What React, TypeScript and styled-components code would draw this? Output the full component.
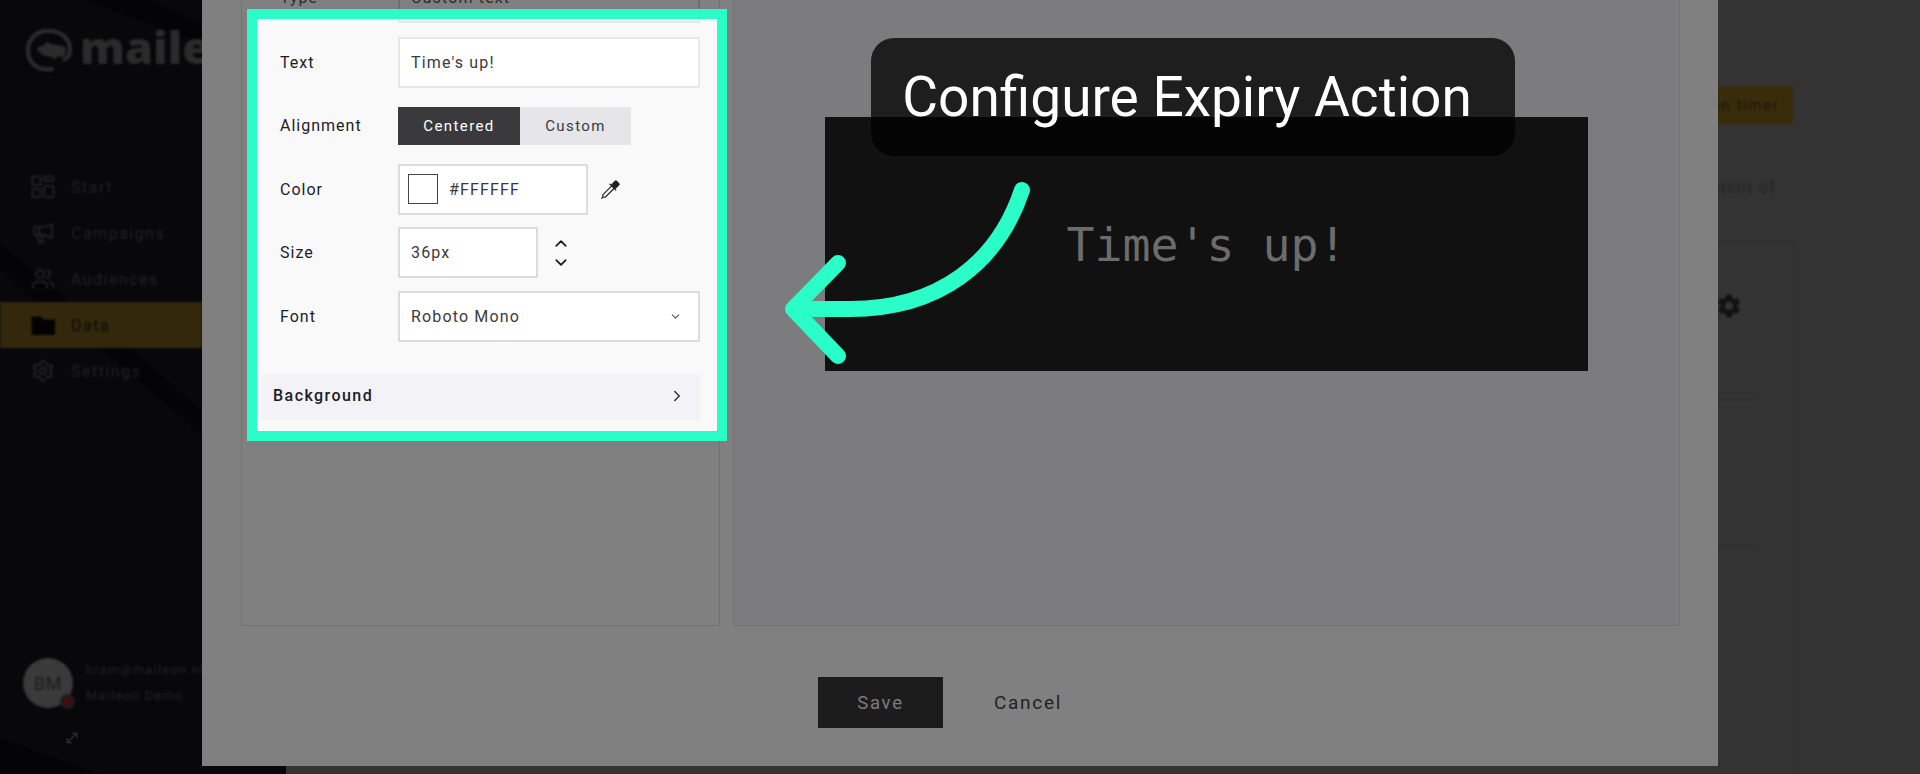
import React from 'react';
import styled, { createGlobalStyle } from 'styled-components';
import { ChevronDown, ChevronRight, ChevronUp, Megaphone, MoveDiagonal, Users, Settings } from 'lucide-react';
import { BsEyedropper } from 'react-icons/bs';
import { MdSettings } from 'react-icons/md';

const ACCENT = '#2bfdc8';

const GlobalStyle = createGlobalStyle`
    html, body {
        margin: 0;
        height: 100%;
        overflow: hidden;
        background: #333;
    }
    body, button {
        font-family: Roboto, "Liberation Sans", sans-serif;
    }
`;

const Stage = styled.div`
    position: relative;
    display: flex;
    width: 1920px;
    height: 774px;
    overflow: hidden;
`;

/* ---- dimmed app behind the dialog ---- */

const Sidebar = styled.aside`
    position: relative;
    flex: 0 0 202px;
    height: 774px;
    overflow: hidden;
    background: #08080b;
`;

const SidebarBands = styled.svg`
    position: absolute;
    left: 0;
    top: 0;
`;

const SidebarBlur = styled.div`
    position: relative;
    display: flex;
    flex-direction: column;
    height: 100%;
    filter: blur(0.8px);
`;

const Logo = styled.div`
    display: flex;
    align-items: center;
    gap: 7px;
    height: 44px;
    padding: 28px 0 0 25px;
    white-space: nowrap;
    color: #2b2b2b;
    font-family: "Open Sans", sans-serif;
    font-size: 45px;
    font-weight: 800;
    & svg {
        flex: none;
    }
`;

const LogoText = styled.span`
    margin-bottom: 8px;
`;

const Nav = styled.nav`
    display: flex;
    flex-direction: column;
    margin-top: 92px;
`;

const NavRow = styled.div<{ $active?: boolean }>`
    display: flex;
    align-items: center;
    gap: 16px;
    height: 46px;
    padding-left: 31px;
    background: ${(p) => (p.$active ? '#33280c' : 'transparent')};
    color: ${(p) => (p.$active ? '#0b0b0b' : '#222225')};
    font-size: 16px;
    letter-spacing: 1.5px;
    & svg {
        flex: none;
        width: 24px;
        height: 24px;
    }
`;

const Account = styled.div`
    display: flex;
    align-items: center;
    gap: 13px;
    margin-top: auto;
    margin-bottom: 62px;
    padding: 0 0 4px 23px;
`;

const Avatar = styled.div`
    position: relative;
    display: flex;
    flex: none;
    align-items: center;
    justify-content: center;
    width: 50px;
    height: 50px;
    border-radius: 50%;
    background: #3a3a3a;
    color: #1c1c1c;
    font-size: 18px;
    letter-spacing: 0.5px;
`;

const AvatarBadge = styled.span`
    position: absolute;
    right: -2px;
    bottom: -1px;
    width: 15px;
    height: 15px;
    border-radius: 50%;
    background: radial-gradient(circle, #470a13 0 4px, #1d1d1f 5px);
`;

const AccountText = styled.div`
    display: flex;
    flex-direction: column;
    gap: 12px;
    color: #252528;
    font-size: 12.5px;
    line-height: 14px;
    letter-spacing: 1.4px;
    white-space: nowrap;
`;

const ExpandIcon = styled(MoveDiagonal)`
    position: absolute;
    left: 64px;
    top: 730px;
    width: 16px;
    height: 16px;
    color: #2c2c2c;
    filter: blur(0.6px);
`;

const Main = styled.main`
    flex: 1;
    display: flex;
    flex-direction: column;
    align-items: flex-end;
    padding-top: 86px;
    background: linear-gradient(to right, #08080b 84px, #333 84px);
    color: #242424;
`;

const BackdropBlur = styled.div`
    display: flex;
    flex-direction: column;
    align-items: flex-end;
    width: 100%;
    filter: blur(0.8px);
`;

const TimerButton = styled.div`
    display: flex;
    align-items: center;
    justify-content: flex-end;
    width: 240px;
    height: 38px;
    margin-right: 127px;
    padding-right: 14px;
    box-sizing: border-box;
    background: #382c0b;
    color: #191509;
    font-size: 15px;
    letter-spacing: 1.5px;
`;

const Intro = styled.p`
    margin: 55px 144px 0 0;
    font-size: 16px;
    line-height: 18px;
    letter-spacing: 1.3px;
    white-space: nowrap;
`;

const BackdropCard = styled.div`
    display: flex;
    flex-direction: column;
    align-items: flex-end;
    width: 300px;
    height: 560px;
    box-sizing: border-box;
    margin: 45px 125px 0 0;
    padding: 49px 51px 0 0;
    border-top: 1px solid #2f2f2f;
    border-right: 1px solid #2e2e2e;
    color: #111;
    & svg {
        width: 28px;
        height: 28px;
    }
`;

const CardRule = styled.div<{ $gap: number }>`
    width: 90px;
    height: 1px;
    margin-top: ${(p) => p.$gap}px;
    margin-right: -11px;
    background: #2d2d2d;
`;

/* ---- dialog ---- */

const Modal = styled.section`
    position: absolute;
    left: 202px;
    top: 0;
    display: flex;
    flex-direction: column;
    box-sizing: border-box;
    width: 1516px;
    height: 766px;
    padding: 0 39px;
    background: #808080;
`;

const Panels = styled.div`
    display: grid;
    grid-template-columns: 479px 947px;
    gap: 13px;
    height: 626px;
    flex: none;
`;

const FormPanel = styled.div`
    display: flex;
    flex-direction: column;
    box-sizing: border-box;
    height: 626px;
    border: 1px solid #737375;
    border-top: none;
`;

const PreviewPanel = styled.div`
    display: flex;
    justify-content: center;
    box-sizing: border-box;
    height: 626px;
    padding-top: 117px;
    border: 1px solid #737375;
    border-top: none;
    background: #7c7c7e;
`;

const Preview = styled.div`
    display: flex;
    align-items: center;
    justify-content: center;
    box-sizing: border-box;
    width: 763px;
    height: 254px;
    padding-top: 2px;
    background: #111;
    color: #6c6c6c;
    font-family: "DejaVu Sans Mono", monospace;
    font-size: 46.5px;
`;

const Row = styled.div<{ $dim?: boolean }>`
    display: grid;
    grid-template-columns: 118px 302px;
    align-items: center;
    height: 51px;
    color: ${(p) => (p.$dim ? '#2e2e2e' : '#1c1c28')};
    font-size: 16px;
    letter-spacing: 1px;
`;

const DimRow = styled(Row)`
    margin: -28px 0 0 38px;
`;

const Field = styled.div<{ $width?: number; $dim?: boolean; $soft?: boolean }>`
    display: flex;
    align-items: center;
    justify-content: space-between;
    box-sizing: border-box;
    width: ${(p) => p.$width ?? 302}px;
    height: 51px;
    padding: 0 17px 0 11px;
    border: 2px solid ${(p) => (p.$dim ? '#6f6f6f' : p.$soft ? '#e8e8eb' : '#dcdcdf')};
    background: ${(p) => (p.$dim ? '#808080' : '#fff')};
    color: ${(p) => (p.$dim ? '#2c2c2c' : '#3a3a40')};
    letter-spacing: 1.15px;
`;

const Spotlight = styled.div`
    position: relative;
    z-index: 1;
    display: flex;
    flex-direction: column;
    box-sizing: border-box;
    width: 460px;
    height: 412px;
    margin: -4px 0 0 15px;
    padding: 0 17px 0 23px;
    outline: 10px solid ${ACCENT};
    background: #f9f9f9;
`;

const FieldSliver = styled.div`
    flex: none;
    box-sizing: border-box;
    width: 302px;
    height: 4px;
    margin: 0 0 14px 118px;
    border: 2px solid #e8e8eb;
    border-top: none;
    background: #fff;
`;

const Rows = styled.div`
    display: flex;
    flex-direction: column;
    gap: 12.4px;
`;

const Toggle = styled.div`
    display: flex;
    height: 38px;
`;

const ToggleOption = styled.div<{ $on?: boolean }>`
    display: flex;
    align-items: center;
    justify-content: center;
    width: ${(p) => (p.$on ? 122 : 111)}px;
    background: ${(p) => (p.$on ? '#3a3a3c' : '#e5e5ea')};
    color: ${(p) => (p.$on ? '#fff' : '#3a3a40')};
    font-size: 15px;
    letter-spacing: 1.4px;
`;

const ColorCell = styled.div`
    display: flex;
    align-items: center;
    & > svg {
        width: 19px;
        height: 19px;
        margin-left: 13px;
        color: #222;
    }
`;

const ColorValue = styled.div`
    display: flex;
    align-items: center;
    gap: 11px;
`;

const Swatch = styled.span`
    flex: none;
    box-sizing: border-box;
    width: 30px;
    height: 30px;
    margin-left: -3px;
    border: 1.5px solid #444;
    background: #fff;
`;

const SizeCell = styled.div`
    display: flex;
    align-items: center;
`;

const Stepper = styled.div`
    display: flex;
    flex-direction: column;
    margin-left: 13px;
    color: #111;
    & svg {
        display: block;
        width: 20px;
        height: 19px;
    }
`;

const SmallChevron = styled(ChevronDown)`
    width: 13px;
    height: 13px;
    margin-right: -1px;
    color: #555;
`;

const Accordion = styled.div`
    display: flex;
    flex: none;
    align-items: center;
    justify-content: space-between;
    box-sizing: border-box;
    width: 439px;
    height: 46px;
    margin: 32px 0 0 -19px;
    padding: 0 14px 2px 12px;
    background: #f2f2f7;
    color: #1c1c28;
    font-size: 16px;
    font-weight: 500;
    letter-spacing: 1.45px;
    & svg {
        width: 18px;
        height: 18px;
        color: #333;
    }
`;

const Footer = styled.div`
    display: flex;
    align-items: center;
    padding: 51px 0 0 577px;
`;

const SaveButton = styled.button`
    width: 125px;
    height: 51px;
    border: none;
    background: #1c1c1c;
    color: #7c7c7c;
    font-size: 18.5px;
    letter-spacing: 1.7px;
`;

const CancelButton = styled.button`
    width: 170px;
    height: 51px;
    border: none;
    background: none;
    color: #222;
    font-size: 19px;
    letter-spacing: 1.7px;
`;

/* ---- annotations ---- */

const Callout = styled.div`
    position: absolute;
    left: 871px;
    top: 38px;
    z-index: 2;
    display: flex;
    align-items: flex-start;
    justify-content: center;
    box-sizing: border-box;
    width: 644px;
    height: 118px;
    padding: 28px 12px 0 0;
    border-radius: 23px;
    background: rgba(0, 0, 0, 0.76);
    color: #fff;
    font-size: 55px;
    line-height: 62px;
    white-space: nowrap;
`;

const ArrowLayer = styled.svg`
    position: absolute;
    left: 770px;
    top: 170px;
    z-index: 3;
`;

const StartIcon = () => (
    <svg viewBox="0 0 24 24" fill="none" stroke="currentColor" strokeWidth="2">
        <rect x="1.5" y="1.5" width="8" height="9" rx="1" />
        <rect x="13" y="1.5" width="9.5" height="4.5" rx="2" />
        <rect x="13" y="11" width="9.5" height="11" rx="1" />
        <rect x="1.5" y="14" width="8" height="8" rx="1" />
    </svg>
);

const FolderIcon = () => (
    <svg viewBox="0 0 24 24" fill="#020202">
        <path d="M1 3.5h9l2.5 3H23a1 1 0 0 1 1 1V21a1 1 0 0 1-1 1H1.500a1 1 0 0 1-1-1V4a.5.5 0 0 1 .5-.5z" />
    </svg>
);

const LogoMark = () => (
    <svg width="48" height="44" viewBox="0 0 50 46" fill="none">
        <path d="M28 43C12 45 3 36 3 23 3 10 13 3 25 3c12 0 22 8 22 19 0 6-3 10-6 11" stroke="#2b2b2b" strokeWidth="4.500" strokeLinecap="round" />
        <path d="M13 20l7-2 3-4 4 3 9 1 7 2-1 8-4 3-3-2-4 4-4-3-7-1-4-3-3-1z" fill="#2b2b2b" />
    </svg>
);

const App = () => (
    <Stage>
        <GlobalStyle />
        <Sidebar>
            <SidebarBands width="202" height="774" viewBox="0 0 202 774" fill="#000" fillOpacity="0.4">
                <polygon points="85,0 150,0 202,24 202,44" />
                <polygon points="0,243 0,270 38,305 70,302" />
                <polygon points="100,347 128,347 202,410 202,436" />
                <polygon points="0,738 0,774 100,774" />
            </SidebarBands>
            <SidebarBlur>
                <Logo>
                    <LogoMark />
                    <LogoText>maileon</LogoText>
                </Logo>
                <Nav>
                    <NavRow><StartIcon />Start</NavRow>
                    <NavRow><Megaphone />Campaigns</NavRow>
                    <NavRow><Users />Audiences</NavRow>
                    <NavRow $active><FolderIcon />Data</NavRow>
                    <NavRow><Settings />Settings</NavRow>
                </Nav>
                <Account>
                    <Avatar>
                        BM
                        <AvatarBadge />
                    </Avatar>
                    <AccountText>
                        <span>bram@maileon.nl</span>
                        <span>Maileon Demo</span>
                    </AccountText>
                </Account>
            </SidebarBlur>
        </Sidebar>
        <ExpandIcon />

        <Main>
            <BackdropBlur>
                <TimerButton>Open timer</TimerButton>
                <Intro>Edit the content of</Intro>
                <BackdropCard>
                    <MdSettings />
                    <CardRule $gap={79} />
                    <CardRule $gap={146} />
                </BackdropCard>
            </BackdropBlur>
        </Main>

        <Modal>
            <Panels>
                <FormPanel>
                    <DimRow $dim>
                        <span>Type</span>
                        <Field $dim>
                            Custom text
                            <SmallChevron />
                        </Field>
                    </DimRow>
                    <Spotlight>
                        <FieldSliver />
                        <Rows>
                            <Row>
                                <span>Text</span>
                                <Field $soft>Time's up!</Field>
                            </Row>
                            <Row>
                                <span>Alignment</span>
                                <Toggle>
                                    <ToggleOption $on>Centered</ToggleOption>
                                    <ToggleOption>Custom</ToggleOption>
                                </Toggle>
                            </Row>
                            <Row>
                                <span>Color</span>
                                <ColorCell>
                                    <Field $width={190}>
                                        <ColorValue>
                                            <Swatch />
                                            #FFFFFF
                                        </ColorValue>
                                    </Field>
                                    <BsEyedropper />
                                </ColorCell>
                            </Row>
                            <Row>
                                <span>Size</span>
                                <SizeCell>
                                    <Field $width={140}>36px</Field>
                                    <Stepper>
                                        <ChevronUp />
                                        <ChevronDown />
                                    </Stepper>
                                </SizeCell>
                            </Row>
                            <Row>
                                <span>Font</span>
                                <Field>
                                    Roboto Mono
                                    <SmallChevron />
                                </Field>
                            </Row>
                        </Rows>
                        <Accordion>
                            Background
                            <ChevronRight />
                        </Accordion>
                    </Spotlight>
                </FormPanel>
                <PreviewPanel>
                    <Preview>Time's up!</Preview>
                </PreviewPanel>
            </Panels>
            <Footer>
                <SaveButton>Save</SaveButton>
                <CancelButton>Cancel</CancelButton>
            </Footer>
        </Modal>

        <Callout>Configure Expiry Action</Callout>
        <ArrowLayer width="270" height="200" viewBox="770 170 270 200" fill="none" stroke={ACCENT} strokeWidth="16" strokeLinecap="round" strokeLinejoin="round">
            <path d="M1022 190C998 262 940 309 850 309 L795 309" />
            <path d="M838 263 793 309 838 356" />
        </ArrowLayer>
    </Stage>
);

export default App;
